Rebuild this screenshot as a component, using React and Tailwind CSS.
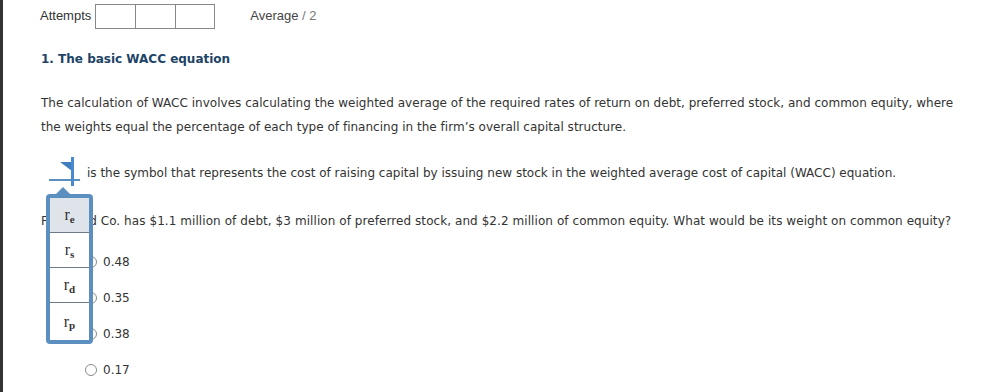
import React from 'react';

const body = "font-['DejaVu_Sans',Verdana,sans-serif]";

function Sub({ base, sub }) {
  return (
    <span className="font-['Liberation_Serif','Times_New_Roman',serif] text-[16px] leading-none text-[#333]">
      {base}
      <sub className="text-[11px] font-bold">{sub}</sub>
    </span>
  );
}

function Radio({ label }) {
  return (
    <div className="flex h-[36px] items-center">
      <span className="ml-[44px] h-[12px] w-[12px] rounded-full border border-[#8a8a8a] bg-white" />
      <span className="ml-[6px]">{label}</span>
    </div>
  );
}

export default function App() {
  const options = ['0.48', '0.35', '0.38', '0.17'];
  const menu = [
    { base: 'r', sub: 'e', h: 'h-[34px]', active: true },
    { base: 'r', sub: 's', h: 'h-[35px]' },
    { base: 'r', sub: 'd', h: 'h-[35px]' },
    { base: 'r', sub: 'p', h: 'h-[38px]' },
  ];

  return (
    <div className={`relative h-[392px] w-[987px] overflow-hidden border-l-[3px] border-[#333] bg-white text-[#333] ${body}`}>
      {/* attempts header */}
      <div className="flex h-[32px] items-center pl-[37px] font-['Liberation_Sans',Arial,sans-serif] text-[13px]">
        <span className="text-[#333]">Attempts</span>
        <div className="ml-[4px] flex h-[25px] border border-[#888]">
          <div className="w-[40px] border-r border-[#888]" />
          <div className="w-[40px] border-r border-[#888]" />
          <div className="w-[38px]" />
        </div>
        <span className="ml-[35px] text-[#444]">
          Average <span className="text-[#777]">/ 2</span>
        </span>
      </div>

      <div className="pl-[38px] pr-[30px]">
        <h2 className="mt-[18px] text-[12px] font-bold leading-[18px] text-[#1d4466]">1. The basic WACC equation</h2>

        <p className="mt-[23px] text-[12px] leading-[24px] tracking-[0.02px]">
          The calculation of WACC involves calculating the weighted average of the required rates of return on debt, preferred stock, and common equity, where the weights equal the percentage of each type of financing in the firm’s overall capital structure.
        </p>

        <div className="mt-[22px] flex h-[24px] items-center text-[12px]">
          <span className="relative ml-[8px] h-[24px] w-[32px]">
            <span className="absolute bottom-[4px] left-0 h-[2px] w-[31px] bg-[#5b8fc0]" />
            <svg className="absolute left-[8px] top-[-4px]" width="24" height="30" viewBox="0 0 24 30">
              <path d="M3 5 L15 5 L15 14 Z" fill="#3f7fbf" />
              <rect x="14" y="0" width="3" height="29" fill="#4a8ad0" />
            </svg>
          </span>
          <span className="ml-[6px]">
            is the symbol that represents the cost of raising capital by issuing new stock in the weighted average cost of capital (WACC) equation.
          </span>
        </div>

        <p className="mt-[24px] text-[12px] leading-[24px] tracking-[0.07px]">
          Fairmead Co. has $1.1 million of debt, $3 million of preferred stock, and $2.2 million of common equity. What would be its weight on common equity?
        </p>

        <div className="mt-[11px] text-[12px]">
          {options.map((o) => (
            <Radio key={o} label={o} />
          ))}
        </div>
      </div>

      {/* open dropdown menu */}
      <div className="absolute left-[43px] top-[186px]">
        <svg className="ml-[10px] block" width="14" height="8" viewBox="0 0 14 8">
          <path d="M0 8 L7 1 L14 8 Z" fill="#5b8fc0" />
        </svg>
        <div className="w-[47px] rounded-[4px] border-[4px] border-[#5b8fc0] bg-white">
          {menu.map((m, i) => (
            <div
              key={m.sub}
              className={`flex items-center justify-center ${m.h} ${m.active ? 'bg-[#dfe4ea]' : 'bg-white'} ${i > 0 ? 'border-t border-[#6b7b8a]' : ''}`}
            >
              <Sub base={m.base} sub={m.sub} />
            </div>
          ))}
        </div>
      </div>
    </div>
  );
}
